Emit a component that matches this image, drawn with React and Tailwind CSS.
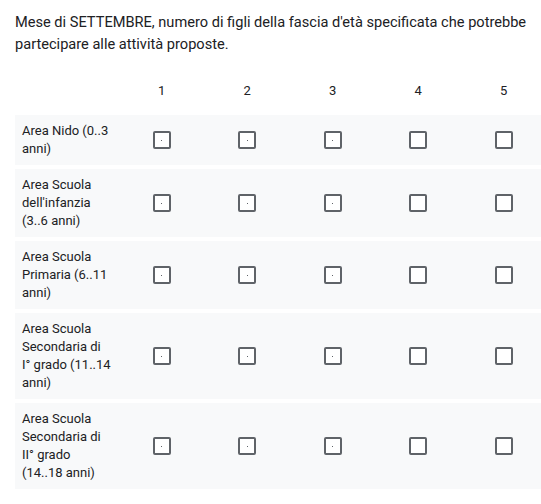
import React from 'react'

const RIGHE = [
  'Area Nido (0..3 anni)',
  "Area Scuola dell'infanzia (3..6 anni)",
  'Area Scuola Primaria (6..11 anni)',
  'Area Scuola Secondaria di I°\u00a0grado (11..14 anni)',
  'Area Scuola Secondaria di II°\u00a0grado (14..18 anni)',
]

const COLONNE = [1, 2, 3, 4, 5]

function Casella({ punto }) {
  return (
    <div className="w-[18px] h-[18px] rounded-[2px] border-2 border-[#5f6368] bg-white flex items-center justify-center">
      {punto && <div className="w-[1px] h-[1px] bg-[#5f6368]" />}
    </div>
  )
}

export default function App() {
  return (
    <div className="w-[541px] h-[504px] overflow-hidden bg-white text-[#202124] font-['Roboto',sans-serif]">
      <p className="pl-[15px] pr-[8px] pt-[11px] text-[14.6px] leading-[22px]">
        Mese di SETTEMBRE, numero di figli della fascia d'età specificata che potrebbe partecipare alle attività proposte.
      </p>

      <div className="pl-[15px] w-[560px]">
        {/* intestazione colonne */}
        <div className="grid grid-cols-[104px_repeat(5,85.5px)] pt-[24px] pb-[12px] text-[13px] leading-[24px]">
          <div />
          {COLONNE.map(c => (
            <div key={c} className="text-center">{c}</div>
          ))}
        </div>

        {/* righe */}
        <div className="flex flex-col gap-[4px]">
          {RIGHE.map(r => (
            <div key={r} className="grid grid-cols-[104px_repeat(5,85.5px)] items-center bg-[#f8f9fa] py-[7px] text-[13px] leading-[18px]">
              <div className="pl-[7px] pr-[6px]">{r}</div>
              {COLONNE.map(c => (
                <div key={c} className="flex justify-center">
                  <Casella punto={c <= 3} />
                </div>
              ))}
            </div>
          ))}
        </div>
      </div>
    </div>
  )
}
